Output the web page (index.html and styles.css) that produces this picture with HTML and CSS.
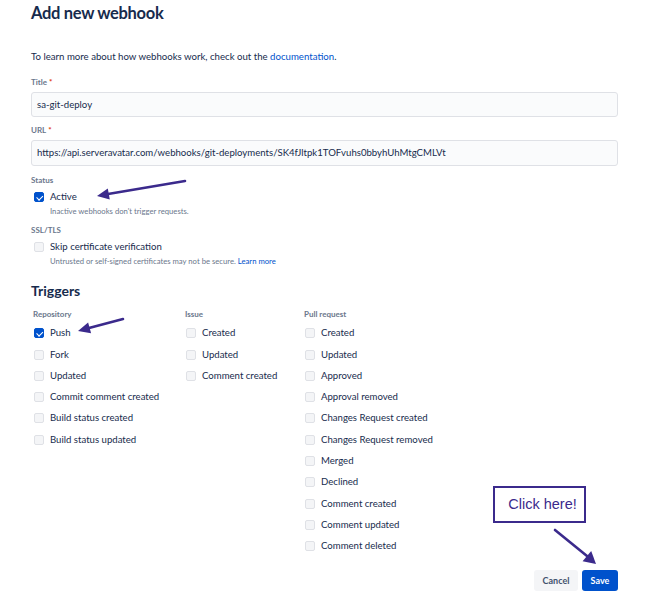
FILE: index.html
```html
<!DOCTYPE html>
<html>
<head>
<meta charset="utf-8">
<link rel="stylesheet" href="styles.css">
</head>
<body>
<div class="page">
  <h1 class="title">Add new webhook</h1>
  <p class="intro">To learn more about how webhooks work, check out the <a href="#">documentation</a>.</p>

  <div class="field">
    <div class="label">Title<span class="req">*</span></div>
    <div class="input">sa-git-deploy</div>
  </div>
  <div class="field">
    <div class="label">URL<span class="req">*</span></div>
    <div class="input">https://api.serveravatar.com/webhooks/git-deployments/SK4fJltpk1TOFvuhs0bbyhUhMtgCMLVt</div>
  </div>

  <div class="field tight">
    <div class="label">Status</div>
    <div class="check"><span class="box on"></span>Active</div>
    <div class="help">Inactive webhooks don't trigger requests.</div>
  </div>
  <div class="field tight">
    <div class="label">SSL/TLS</div>
    <div class="check"><span class="box"></span>Skip certificate verification</div>
    <div class="help">Untrusted or self-signed certificates may not be secure. <a href="#">Learn more</a></div>
  </div>

  <h2 class="sub">Triggers</h2>
  <div class="triggers">
    <div class="col">
      <div class="label col-label">Repository</div>
      <div class="check"><span class="box on"></span>Push</div>
      <div class="check"><span class="box"></span>Fork</div>
      <div class="check"><span class="box"></span>Updated</div>
      <div class="check"><span class="box"></span>Commit comment created</div>
      <div class="check"><span class="box"></span>Build status created</div>
      <div class="check"><span class="box"></span>Build status updated</div>
    </div>
    <div class="col">
      <div class="label col-label">Issue</div>
      <div class="check"><span class="box"></span>Created</div>
      <div class="check"><span class="box"></span>Updated</div>
      <div class="check"><span class="box"></span>Comment created</div>
    </div>
    <div class="col">
      <div class="label col-label">Pull request</div>
      <div class="check"><span class="box"></span>Created</div>
      <div class="check"><span class="box"></span>Updated</div>
      <div class="check"><span class="box"></span>Approved</div>
      <div class="check"><span class="box"></span>Approval removed</div>
      <div class="check"><span class="box"></span>Changes Request created</div>
      <div class="check"><span class="box"></span>Changes Request removed</div>
      <div class="check"><span class="box"></span>Merged</div>
      <div class="check"><span class="box"></span>Declined</div>
      <div class="check"><span class="box"></span>Comment created</div>
      <div class="check"><span class="box"></span>Comment updated</div>
      <div class="check"><span class="box"></span>Comment deleted</div>
    </div>
  </div>

  <div class="actions">
    <button class="btn cancel">Cancel</button>
    <button class="btn save">Save</button>
  </div>
</div>

<div class="callout">Click here!</div>
<svg class="annot" width="655" height="614" viewBox="0 0 655 614">
  <g stroke="#3b2a8c" stroke-width="2.6" stroke-linecap="round" fill="#3b2a8c">
    <line x1="185" y1="181" x2="108" y2="194"/>
    <polygon stroke="none" points="97,196 109.8,199.4 107.8,188.6"/>
    <line x1="123" y1="319" x2="89" y2="328"/>
    <polygon stroke="none" points="78,331 91.1,333.2 88.1,322.6"/>
    <line x1="555" y1="530" x2="587" y2="556"/>
    <polygon stroke="none" points="596,564 582.6,561.3 591.2,550.9"/>
  </g>
</svg>
</body>
</html>
```

FILE: styles.css
```css
* { box-sizing: border-box; }
body {
  margin: 0;
  background: #ffffff;
  font-family: Lato, "Noto Sans", sans-serif;
  color: #172b4d;
  position: relative;
  width: 655px;
  height: 614px;
  overflow: hidden;
}
.page {
  width: 655px;
  padding: 2px 37px 0 31px;
}
.title {
  margin: 0;
  font-size: 16.5px;
  line-height: 22px;
  font-weight: 700;
  letter-spacing: -0.3px;
  color: #172b4d;
}
.intro {
  margin: 25px 0 0;
  font-size: 9.65px;
  line-height: 14px;
}
a { color: #0052cc; text-decoration: none; }
.field { margin-top: 14px; }
.field + .field { margin-top: 8px; }
.field.tight { margin-top: 9px; }
.label {
  font-size: 8px;
  line-height: 10px;
  font-weight: 700;
  color: #6b778c;
}
.req { color: #de350b; margin-left: 2px; }
.input {
  margin-top: 5px;
  height: 25px;
  border: 1px solid #dfe1e6;
  border-radius: 3px;
  background: #fafbfc;
  padding: 0 5px;
  font-size: 9.6px;
  line-height: 23px;
  white-space: nowrap;
  overflow: hidden;
}
.field + .field .input { height: 26px; line-height: 24px; }
.check {
  display: flex;
  align-items: center;
  height: 14px;
  font-size: 9.6px;
  line-height: 14px;
  margin-top: 7.3px;
  white-space: nowrap;
}
.field .check { margin-top: 5px; }
.box {
  width: 10px;
  height: 10px;
  margin: 0 6px 0 3px;
  border: 1px solid #dfe1e6;
  border-radius: 2px;
  background: #f4f5f7;
  flex: none;
  position: relative;
}
.box.on {
  background: #0052cc;
  border-color: #0052cc;
}
.box.on::after {
  content: "";
  position: absolute;
  left: 2.5px;
  top: 1px;
  width: 2.5px;
  height: 4.5px;
  border: solid #ffffff;
  border-width: 0 1.3px 1.3px 0;
  transform: rotate(45deg);
}
.help {
  margin-top: 2px;
  margin-left: 19px;
  font-size: 7.7px;
  line-height: 10px;
  color: #6b778c;
}
.sub {
  margin: 16px 0 0;
  font-size: 14px;
  line-height: 18px;
  font-weight: 700;
}
.triggers {
  margin-top: 9px;
  display: grid;
  grid-template-columns: 152px 119px 1fr;
}
.col-label { padding-left: 2px; }
.col .check:first-of-type { margin-top: 7px; }
.actions {
  margin-top: 17px;
  display: flex;
  justify-content: flex-end;
  gap: 4px;
}
.btn {
  height: 21px;
  border: none;
  border-radius: 3px;
  font-family: Lato, "Noto Sans", sans-serif;
  font-size: 9px;
  font-weight: 700;
  padding: 0 4px;
}
.cancel { background: #f4f5f7; color: #42526e; width: 44px; }
.save { background: #0052cc; color: #ffffff; width: 36px; }
.callout {
  position: absolute;
  left: 493px;
  top: 486px;
  width: 93px;
  height: 37px;
  border: 2.5px solid #3b2a8c;
  background: #ffffff;
  color: #3b2a8c;
  font-family: "Liberation Sans", Arial, sans-serif;
  font-size: 14.5px;
  line-height: 32px;
  text-align: center;
  padding-left: 6px;
}
.annot {
  position: absolute;
  left: 0;
  top: 0;
  pointer-events: none;
}
```
